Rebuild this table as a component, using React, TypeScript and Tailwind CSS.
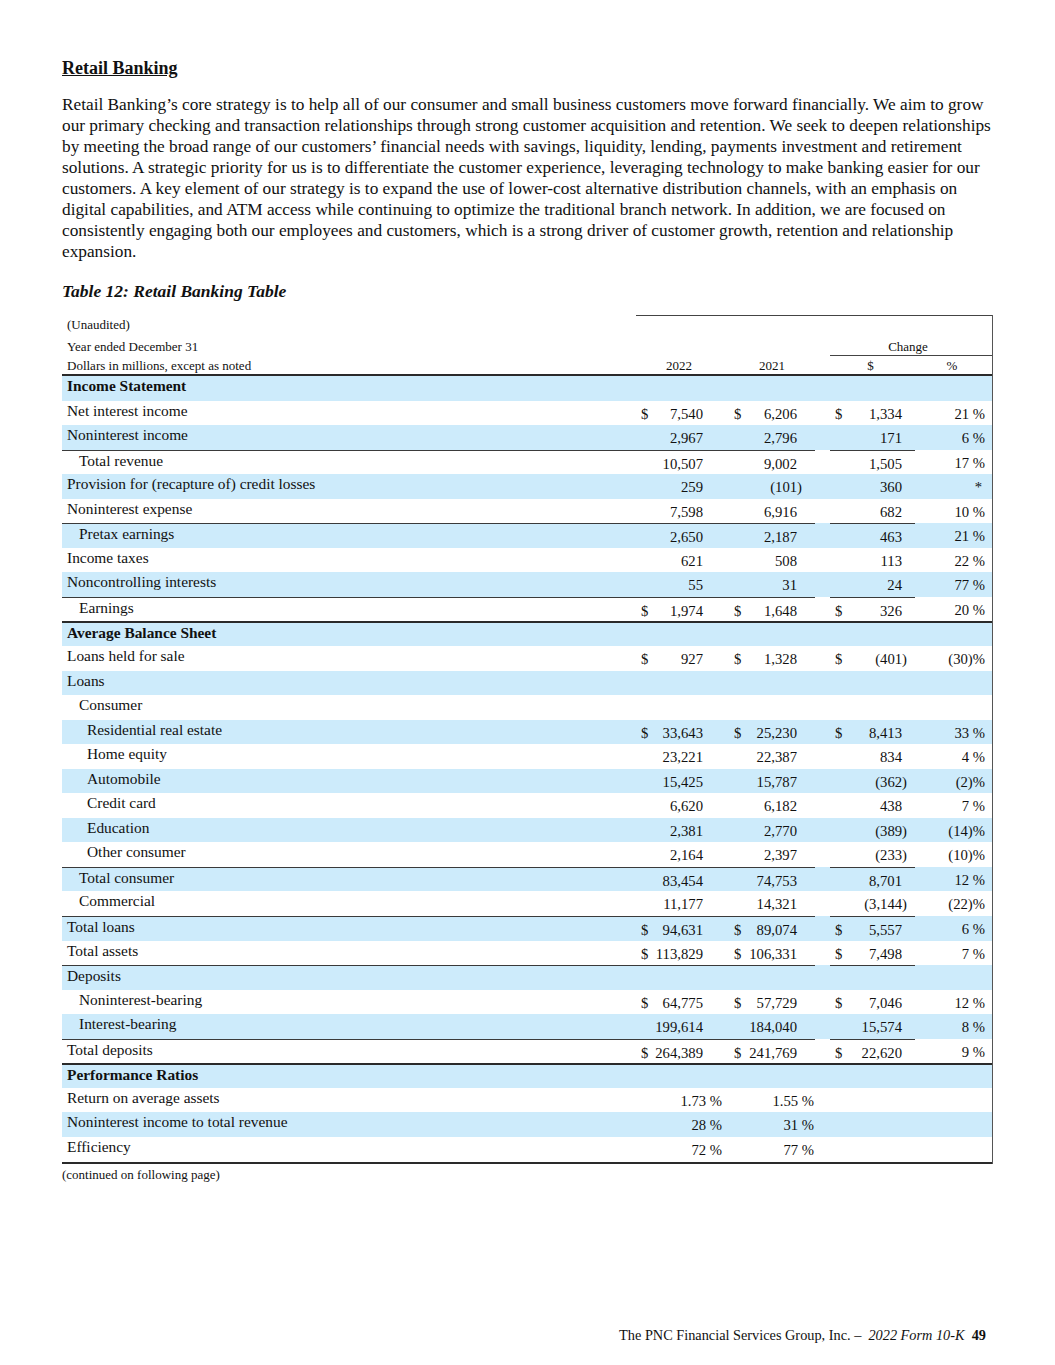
import React from "react";

type Row = {
  label: string;
  indent?: 0 | 1 | 2;
  bold?: boolean;
  v?: [string, string, string, string];
  dollar?: boolean;
  top?: "u" | "thick";
  ratio?: boolean;
};

const rows: Row[] = [
  { label: "Income Statement", bold: true },
  { label: "Net interest income", v: ["7,540", "6,206", "1,334", "21 %"], dollar: true },
  { label: "Noninterest income", v: ["2,967", "2,796", "171", "6 %"] },
  { label: "Total revenue", indent: 1, v: ["10,507", "9,002", "1,505", "17 %"], top: "u" },
  { label: "Provision for (recapture of) credit losses", v: ["259", "(101)", "360", "*"] },
  { label: "Noninterest expense", v: ["7,598", "6,916", "682", "10 %"] },
  { label: "Pretax earnings", indent: 1, v: ["2,650", "2,187", "463", "21 %"], top: "u" },
  { label: "Income taxes", v: ["621", "508", "113", "22 %"] },
  { label: "Noncontrolling interests", v: ["55", "31", "24", "77 %"] },
  { label: "Earnings", indent: 1, v: ["1,974", "1,648", "326", "20 %"], dollar: true, top: "u" },
  { label: "Average Balance Sheet", bold: true, top: "thick" },
  { label: "Loans held for sale", v: ["927", "1,328", "(401)", "(30)%"], dollar: true },
  { label: "Loans" },
  { label: "Consumer", indent: 1 },
  { label: "Residential real estate", indent: 2, v: ["33,643", "25,230", "8,413", "33 %"], dollar: true },
  { label: "Home equity", indent: 2, v: ["23,221", "22,387", "834", "4 %"] },
  { label: "Automobile", indent: 2, v: ["15,425", "15,787", "(362)", "(2)%"] },
  { label: "Credit card", indent: 2, v: ["6,620", "6,182", "438", "7 %"] },
  { label: "Education", indent: 2, v: ["2,381", "2,770", "(389)", "(14)%"] },
  { label: "Other consumer", indent: 2, v: ["2,164", "2,397", "(233)", "(10)%"] },
  { label: "Total consumer", indent: 1, v: ["83,454", "74,753", "8,701", "12 %"], top: "u" },
  { label: "Commercial", indent: 1, v: ["11,177", "14,321", "(3,144)", "(22)%"] },
  { label: "Total loans", v: ["94,631", "89,074", "5,557", "6 %"], dollar: true, top: "u" },
  { label: "Total assets", v: ["113,829", "106,331", "7,498", "7 %"], dollar: true },
  { label: "Deposits", top: "u" },
  { label: "Noninterest-bearing", indent: 1, v: ["64,775", "57,729", "7,046", "12 %"], dollar: true },
  { label: "Interest-bearing", indent: 1, v: ["199,614", "184,040", "15,574", "8 %"] },
  { label: "Total deposits", v: ["264,389", "241,769", "22,620", "9 %"], dollar: true, top: "u" },
  { label: "Performance Ratios", bold: true, top: "thick" },
  { label: "Return on average assets", v: ["1.73 %", "1.55 %", "", ""], ratio: true },
  { label: "Noninterest income to total revenue", v: ["28 %", "31 %", "", ""], ratio: true },
  { label: "Efficiency", v: ["72 %", "77 %", "", ""], ratio: true },
];

const para = [
  "Retail Banking’s core strategy is to help all of our consumer and small business customers move forward financially. We aim to grow",
  "our primary checking and transaction relationships through strong customer acquisition and retention. We seek to deepen relationships",
  "by meeting the broad range of our customers’ financial needs with savings, liquidity, lending, payments investment and retirement",
  "solutions. A strategic priority for us is to differentiate the customer experience, leveraging technology to make banking easier for our",
  "customers. A key element of our strategy is to expand the use of lower-cost alternative distribution channels, with an emphasis on",
  "digital capabilities, and ATM access while continuing to optimize the traditional branch network. In addition, we are focused on",
  "consistently engaging both our employees and customers, which is a strong driver of customer growth, retention and relationship",
  "expansion.",
];

function Num({ value }: { value: string }) {
  if (value.endsWith(")")) {
    return (
      <span className="flex">
        <span>{value.slice(0, -1)}</span>
        <span className="-mr-[5px]">)</span>
      </span>
    );
  }
  return <span>{value}</span>;
}

function TableRow({ r, i }: { r: Row; i: number }) {
  const band = i % 2 === 0 ? "bg-[#cdebfb]" : "bg-white";
  const u = r.top === "u" ? "border-t border-[#3a3a3a]" : "";
  const thick = r.top === "thick" ? "border-t-2 border-[#2a2a2a]" : "";
  const indent = r.indent === 2 ? "pl-[25px]" : r.indent === 1 ? "pl-[17px]" : "pl-[5px]";
  return (
    <div className={`flex h-[24.55px] ${band} ${thick}`}>
      <div className={`w-[574px] shrink-0 ${u} ${indent} pt-[0px] leading-[19px] text-[15.4px] ${r.bold ? "font-bold" : ""}`}>
        {r.label}
      </div>
      {r.v && !r.ratio ? (
        <>
          <div className={`w-[86px] shrink-0 ${u} flex justify-between pl-[5px] pr-[19px] pt-[4px] leading-[18px] text-[14.7px]`}>
            <span>{r.dollar ? "$" : ""}</span>
            <Num value={r.v[0]} />
          </div>
          <div className={`w-[93px] shrink-0 ${u} flex justify-between pl-[12px] pr-[18px] pt-[4px] leading-[18px] text-[14.7px]`}>
            <span>{r.dollar ? "$" : ""}</span>
            <Num value={r.v[1]} />
          </div>
          <div className="w-[15px] shrink-0" />
          <div className={`w-[85px] shrink-0 ${u} flex justify-between pl-[5px] pr-[13px] pt-[4px] leading-[18px] text-[14.7px]`}>
            <span>{r.dollar ? "$" : ""}</span>
            <Num value={r.v[2]} />
          </div>
          <div className={`flex-1 flex justify-end ${r.v[3] === "*" ? "pr-[10px]" : "pr-[7px]"} pt-[4px] leading-[18px] text-[14.7px]`}>
            {r.v[3]}
          </div>
        </>
      ) : r.ratio && r.v ? (
        <>
          <div className="w-[86px] shrink-0 flex justify-end pr-[0px] pt-[4px] leading-[18px] text-[14.7px]">{r.v[0]}</div>
          <div className="w-[93px] shrink-0 flex justify-end pr-[1px] pt-[4px] leading-[18px] text-[14.7px]">{r.v[1]}</div>
          <div className="flex-1" />
        </>
      ) : (
        <>
          <div className={`w-[86px] shrink-0 ${u}`} />
          <div className={`w-[93px] shrink-0 ${u}`} />
          <div className="w-[15px] shrink-0" />
          <div className={`w-[85px] shrink-0 ${u}`} />
          <div className="flex-1" />
        </>
      )}
    </div>
  );
}

export default function App() {
  return (
    <div className="font-['Liberation_Serif','Times_New_Roman',serif] text-[#111] bg-white h-[1365px] flex flex-col pl-[62px] pt-[58px] pb-[21px]">
      <div className="w-[931px]">
        <h1 className="text-[18px] leading-[21px] font-bold underline">Retail Banking</h1>
        <p className="mt-[15px] text-[17.3px] leading-[21px] w-[960px] whitespace-nowrap">
          {para.map((line, i) => (
            <span key={i} className="block">
              {line}
            </span>
          ))}
        </p>
        <h2 className="mt-[19px] text-[17.5px] leading-[21px] font-bold italic">Table 12: Retail Banking Table</h2>

        <div className="mt-[13px] border-r border-[#555]">
          {/* header row 1 */}
          <div className="flex h-[20.5px] text-[13px] leading-[16px]">
            <div className="w-[574px] shrink-0 pl-[5px] pt-[2px]">(Unaudited)</div>
            <div className="flex-1 border-t border-[#444]" />
          </div>
          {/* header row 2 */}
          <div className="flex h-[20.5px] text-[13px] leading-[16px]">
            <div className="w-[574px] shrink-0 pl-[5px] pt-[3px]">Year ended December 31</div>
            <div className="w-[86px] shrink-0" />
            <div className="w-[93px] shrink-0" />
            <div className="w-[15px] shrink-0" />
            <div className="flex-1 border-b border-[#444] text-center pt-[3px] pr-[6px]">Change</div>
          </div>
          {/* header row 3 */}
          <div className="flex h-[20px] text-[13px] leading-[16px] border-b-2 border-[#2a2a2a]">
            <div className="w-[574px] shrink-0 pl-[5px] pt-[2px]">Dollars in millions, except as noted</div>
            <div className="w-[86px] shrink-0 text-center pt-[2px]">2022</div>
            <div className="w-[93px] shrink-0 text-center pt-[2px] pl-[7px]">2021</div>
            <div className="w-[15px] shrink-0" />
            <div className="w-[85px] shrink-0 text-center pt-[2px] pr-[4px]">$</div>
            <div className="flex-1 text-center pt-[2px] pr-[3px]">%</div>
          </div>
          {rows.map((r, i) => (
            <TableRow key={i} r={r} i={i} />
          ))}
          <div className="border-t-2 border-[#2a2a2a]" />
        </div>
        <div className="mt-[3px] text-[13px] leading-[16px]">(continued on following page)</div>
      </div>

      <div className="mt-auto w-[924px] text-right text-[14.3px] leading-[17px]">
        The PNC Financial Services Group, Inc. –&nbsp; <span className="italic">2022 Form 10-K</span>&nbsp; <span className="font-bold">49</span>
      </div>
    </div>
  );
}
